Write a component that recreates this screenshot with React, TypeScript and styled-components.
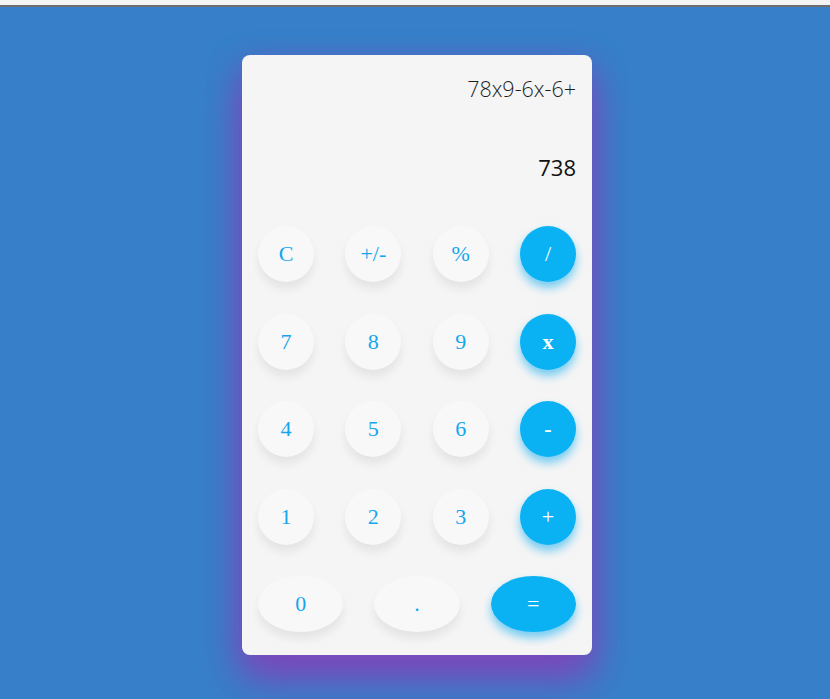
import React from "react";
import styled, { createGlobalStyle, css } from "styled-components";

const Global = createGlobalStyle`
  html, body { margin: 0; padding: 0; }
  body {
    background: #3780c9;
    min-height: 699px;
    font-family: "Liberation Serif", serif;
  }
`;

const Page = styled.div`
  min-height: 699px;
  display: flex;
  flex-direction: column;
  align-items: center;
  overflow: hidden;
`;

const TopStrip = styled.div`
  align-self: stretch;
  height: 5px;
  background: #f4f4f4;
  border-bottom: 2px solid #6e6e6e;
`;

const Card = styled.div`
  margin-top: 48px;
  margin-left: 4px;
  width: 350px;
  height: 600px;
  box-sizing: border-box;
  background: #f5f5f5;
  border-radius: 8px;
  padding: 22px 16px 23px;
  display: flex;
  flex-direction: column;
  box-shadow: 0 24px 40px rgba(125, 70, 185, 0.95), 0 10px 30px rgba(125, 70, 185, 0.55);
`;

const Display = styled.div`
  height: 149px;
  display: flex;
  flex-direction: column;
  align-items: flex-end;
  font-family: "Open Sans", sans-serif;
`;

const Expression = styled.div`
  font-size: 21.5px;
  line-height: 24px;
  font-weight: 300;
  color: #1e1e1e;
`;

const Result = styled.div`
  margin-top: 53px;
  font-size: 22px;
  line-height: 26px;
  color: #111;
`;

const Grid = styled.div`
  display: grid;
  grid-template-columns: repeat(4, 56px);
  justify-content: space-between;
  row-gap: 31.5px;
`;

const LastRow = styled.div`
  margin-top: 31.5px;
  display: grid;
  grid-template-columns: repeat(3, 1fr);
  column-gap: 31px;
`;

const Key = styled.button<{ $op?: boolean; $bold?: boolean; $wide?: boolean }>`
  height: 56px;
  width: ${(p) => (p.$wide ? "100%" : "56px")};
  border: none;
  border-radius: 50%;
  padding: 0;
  font-family: "Liberation Serif", serif;
  font-size: 22px;
  font-weight: ${(p) => (p.$bold ? 700 : 400)};
  cursor: pointer;
  display: flex;
  align-items: center;
  justify-content: center;
  ${(p) =>
    p.$op
      ? css`
          background: #0ab2f4;
          color: #fff;
          box-shadow: 0 6px 10px rgba(10, 170, 240, 0.55);
        `
      : css`
          background: #f8f8f8;
          color: #14a6f0;
          box-shadow: 0 7px 10px rgba(0, 0, 0, 0.07);
        `}
`;

const rows: { label: string; op?: boolean; bold?: boolean }[][] = [
  [{ label: "C" }, { label: "+/-" }, { label: "%" }, { label: "/", op: true }],
  [{ label: "7" }, { label: "8" }, { label: "9" }, { label: "x", op: true, bold: true }],
  [{ label: "4" }, { label: "5" }, { label: "6" }, { label: "-", op: true, bold: true }],
  [{ label: "1" }, { label: "2" }, { label: "3" }, { label: "+", op: true }],
];

export default function App() {
  return (
    <>
      <Global />
      <Page>
        <TopStrip />
        <Card>
          <Display>
            <Expression>78x9-6x-6+</Expression>
            <Result>738</Result>
          </Display>
          <Grid>
            {rows.flat().map((k, i) => (
              <Key key={i} $op={k.op} $bold={k.bold}>
                {k.label}
              </Key>
            ))}
          </Grid>
          <LastRow>
            <Key $wide>0</Key>
            <Key $wide>.</Key>
            <Key $wide $op>=</Key>
          </LastRow>
        </Card>
      </Page>
    </>
  );
}
